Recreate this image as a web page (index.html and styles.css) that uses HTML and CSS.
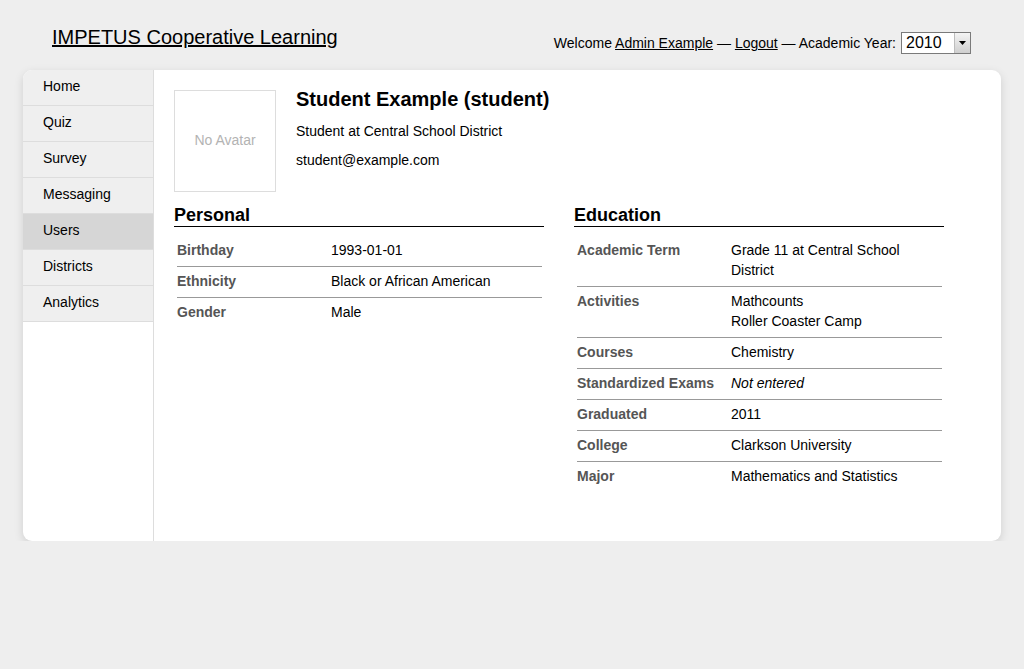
FILE: index.html
```html
<!DOCTYPE html>
<html>
<head>
<meta charset="utf-8">
<title>IMPETUS Cooperative Learning</title>
<link rel="stylesheet" href="styles.css">
</head>
<body>
<div class="page">
  <header class="header">
    <a class="brand" href="#">IMPETUS Cooperative Learning</a>
    <div class="userbar">
      <span>Welcome <a href="#">Admin Example</a> — <a href="#">Logout</a> — Academic Year:</span>
      <span class="select"><span class="select-value">2010</span><span class="select-btn"><svg width="7" height="4" viewBox="0 0 7 4"><path d="M0 0h7L3.5 4z" fill="#000"/></svg></span></span>
    </div>
  </header>
  <div class="card">
    <nav class="sidebar">
      <a class="nav-item" href="#">Home</a>
      <a class="nav-item" href="#">Quiz</a>
      <a class="nav-item" href="#">Survey</a>
      <a class="nav-item" href="#">Messaging</a>
      <a class="nav-item active" href="#">Users</a>
      <a class="nav-item" href="#">Districts</a>
      <a class="nav-item" href="#">Analytics</a>
    </nav>
    <main class="main">
      <div class="profile">
        <div class="avatar">No Avatar</div>
        <div class="profile-info">
          <h1 class="name">Student Example (student)</h1>
          <p class="line">Student at Central School District</p>
          <p class="line">student@example.com</p>
        </div>
      </div>
      <div class="sections">
        <section class="section">
          <h2 class="section-title">Personal</h2>
          <table class="details">
            <tr><th>Birthday</th><td>1993-01-01</td></tr>
            <tr><th>Ethnicity</th><td>Black or African American</td></tr>
            <tr><th>Gender</th><td>Male</td></tr>
          </table>
        </section>
        <section class="section">
          <h2 class="section-title">Education</h2>
          <table class="details">
            <tr><th>Academic Term</th><td>Grade 11 at Central School District</td></tr>
            <tr><th>Activities</th><td>Mathcounts<br>Roller Coaster Camp</td></tr>
            <tr><th>Courses</th><td>Chemistry</td></tr>
            <tr><th>Standardized Exams</th><td><em>Not entered</em></td></tr>
            <tr><th>Graduated</th><td>2011</td></tr>
            <tr><th>College</th><td>Clarkson University</td></tr>
            <tr><th>Major</th><td>Mathematics and Statistics</td></tr>
          </table>
        </section>
      </div>
    </main>
  </div>
</div>
</body>
</html>
```

FILE: styles.css
```css
html, body {
  margin: 0;
  padding: 0;
  background: #eeeeee;
}
body {
  font-family: "Liberation Sans", Arial, Helvetica, sans-serif;
  font-size: 14px;
  color: #000;
}
a {
  color: #000;
}
.page {
  padding: 0 23px;
}
.header {
  display: flex;
  justify-content: space-between;
  align-items: flex-start;
  height: 70px;
}
.brand {
  font-size: 20px;
  line-height: 24px;
  margin-top: 25px;
  margin-left: 29px;
}
.userbar {
  display: flex;
  align-items: center;
  gap: 5px;
  margin-top: 31px;
  margin-right: 30px;
  line-height: 22px;
}
.userbar > span:first-child {
  padding-top: 1px;
}
.select {
  display: flex;
  width: 70px;
  height: 22px;
  box-sizing: border-box;
  border: 1px solid #7a7a7a;
  background: #fff;
}
.select-value {
  flex: 1;
  font-size: 16px;
  line-height: 20px;
  padding-left: 4px;
}
.select-btn {
  width: 15px;
  display: flex;
  align-items: center;
  justify-content: center;
  background: linear-gradient(#f4f4f4, #cfcfcf);
  border-left: 1px solid #bdbdbd;
}
.card {
  display: flex;
  min-height: 471px;
  background: #fff;
  border-radius: 9px;
  box-shadow: 0 3px 10px rgba(0, 0, 0, 0.13);
  overflow: hidden;
}
.sidebar {
  width: 130px;
  flex: none;
  border-right: 1px solid #dddddd;
  display: flex;
  flex-direction: column;
}
.nav-item {
  display: block;
  height: 35px;
  line-height: 33px;
  padding-left: 20px;
  background: #efefef;
  border-bottom: 1px solid #dddddd;
  text-decoration: none;
  color: #000;
}
.nav-item.active {
  background: #d6d6d6;
}
.main {
  flex: 1;
  padding: 20px 20px 20px 20px;
}
.profile {
  display: flex;
  gap: 20px;
}
.avatar {
  width: 100px;
  height: 97px;
  padding-bottom: 3px;
  border: 1px solid #dddddd;
  display: flex;
  align-items: center;
  justify-content: center;
  color: #b3b3b3;
  font-size: 14px;
}
.name {
  font-size: 20px;
  line-height: 20px;
  margin: -1px 0 14px;
  font-weight: bold;
}
.line {
  margin: 0 0 13px;
  line-height: 16px;
}
.sections {
  display: flex;
  gap: 30px;
  margin-top: 13px;
}
.section {
  width: 370px;
}
.section-title {
  font-size: 18px;
  line-height: 20px;
  margin: 0;
  padding-bottom: 1px;
  border-bottom: 1px solid #000;
  font-weight: bold;
}
.details {
  border-collapse: collapse;
  margin: 9px 2px 0 3px;
  width: 365px;
}
.details th,
.details td {
  text-align: left;
  vertical-align: top;
  padding: 4px 0 6px;
  line-height: 20px;
  font-size: 14px;
}
.details th {
  width: 154px;
  color: #555555;
  font-weight: bold;
}
.details tr + tr th,
.details tr + tr td {
  border-top: 1px solid #999999;
}
```
